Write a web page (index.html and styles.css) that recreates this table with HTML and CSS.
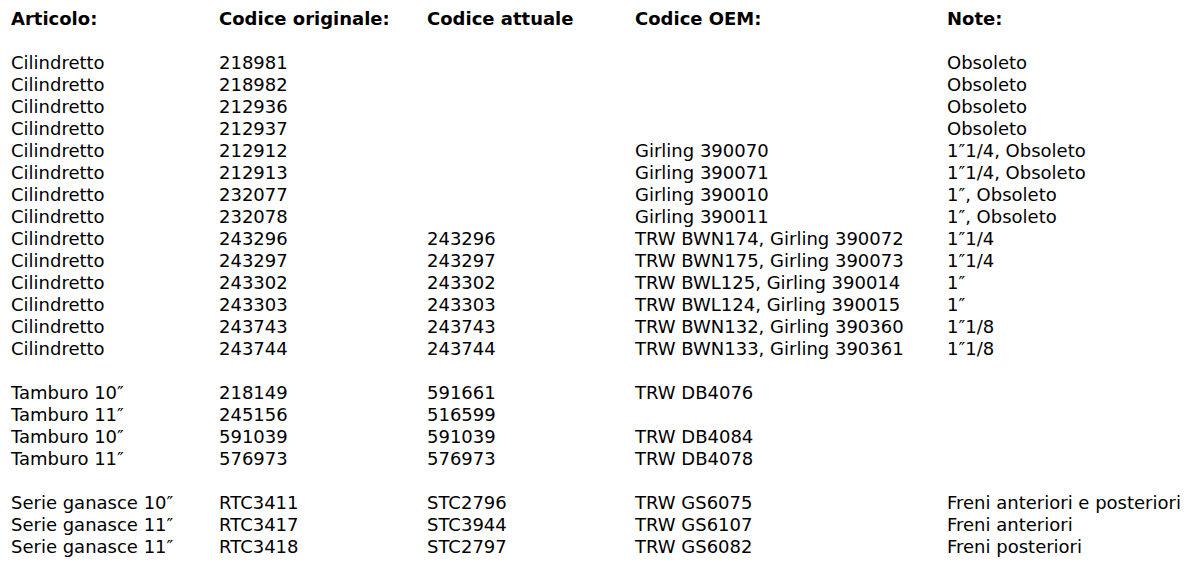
FILE: index.html
```html
<!DOCTYPE html>
<html lang="it">
<head>
<meta charset="utf-8">
<title>Ricambi</title>
<link rel="stylesheet" href="styles.css">
</head>
<body>
<table class="parts">
  <colgroup>
    <col class="c1"><col class="c2"><col class="c3"><col class="c4"><col class="c5">
  </colgroup>
  <thead>
    <tr><th>Articolo:</th><th>Codice originale:</th><th>Codice attuale</th><th>Codice OEM:</th><th>Note:</th></tr>
  </thead>
  <tbody>
    <tr class="gap"><td colspan="5"></td></tr>
    <tr><td>Cilindretto</td><td>218981</td><td></td><td></td><td>Obsoleto</td></tr>
    <tr><td>Cilindretto</td><td>218982</td><td></td><td></td><td>Obsoleto</td></tr>
    <tr><td>Cilindretto</td><td>212936</td><td></td><td></td><td>Obsoleto</td></tr>
    <tr><td>Cilindretto</td><td>212937</td><td></td><td></td><td>Obsoleto</td></tr>
    <tr><td>Cilindretto</td><td>212912</td><td></td><td>Girling 390070</td><td>1″1/4, Obsoleto</td></tr>
    <tr><td>Cilindretto</td><td>212913</td><td></td><td>Girling 390071</td><td>1″1/4, Obsoleto</td></tr>
    <tr><td>Cilindretto</td><td>232077</td><td></td><td>Girling 390010</td><td>1″, Obsoleto</td></tr>
    <tr><td>Cilindretto</td><td>232078</td><td></td><td>Girling 390011</td><td>1″, Obsoleto</td></tr>
    <tr><td>Cilindretto</td><td>243296</td><td>243296</td><td>TRW BWN174, Girling 390072</td><td>1″1/4</td></tr>
    <tr><td>Cilindretto</td><td>243297</td><td>243297</td><td>TRW BWN175, Girling 390073</td><td>1″1/4</td></tr>
    <tr><td>Cilindretto</td><td>243302</td><td>243302</td><td>TRW BWL125, Girling 390014</td><td>1″</td></tr>
    <tr><td>Cilindretto</td><td>243303</td><td>243303</td><td>TRW BWL124, Girling 390015</td><td>1″</td></tr>
    <tr><td>Cilindretto</td><td>243743</td><td>243743</td><td>TRW BWN132, Girling 390360</td><td>1″1/8</td></tr>
    <tr><td>Cilindretto</td><td>243744</td><td>243744</td><td>TRW BWN133, Girling 390361</td><td>1″1/8</td></tr>
    <tr class="gap"><td colspan="5"></td></tr>
    <tr><td>Tamburo 10″</td><td>218149</td><td>591661</td><td>TRW DB4076</td><td></td></tr>
    <tr><td>Tamburo 11″</td><td>245156</td><td>516599</td><td></td><td></td></tr>
    <tr><td>Tamburo 10″</td><td>591039</td><td>591039</td><td>TRW DB4084</td><td></td></tr>
    <tr><td>Tamburo 11″</td><td>576973</td><td>576973</td><td>TRW DB4078</td><td></td></tr>
    <tr class="gap"><td colspan="5"></td></tr>
    <tr><td>Serie ganasce 10″</td><td>RTC3411</td><td>STC2796</td><td>TRW GS6075</td><td>Freni anteriori e posteriori</td></tr>
    <tr><td>Serie ganasce 11″</td><td>RTC3417</td><td>STC3944</td><td>TRW GS6107</td><td>Freni anteriori</td></tr>
    <tr><td>Serie ganasce 11″</td><td>RTC3418</td><td>STC2797</td><td>TRW GS6082</td><td>Freni posteriori</td></tr>
  </tbody>
</table>
</body>
</html>
```
FILE: styles.css
```css
html, body {
  margin: 0;
  background: #fff;
}
body {
  padding: 8px 0 0 11px;
  font-family: "DejaVu Sans", Verdana, sans-serif;
  font-size: 18px;
  color: #000;
}
.parts {
  border-collapse: collapse;
  table-layout: fixed;
  width: 1200px;
}
.parts .c1, .parts .c2, .parts .c3 { width: 208px; }
.parts .c4 { width: 312px; }
.parts .c5 { width: auto; }
.parts th, .parts td {
  padding: 0;
  height: 22px;
  line-height: 22px;
  text-align: left;
  vertical-align: middle;
  white-space: nowrap;
}
.parts th {
  font-weight: bold;
}
```
